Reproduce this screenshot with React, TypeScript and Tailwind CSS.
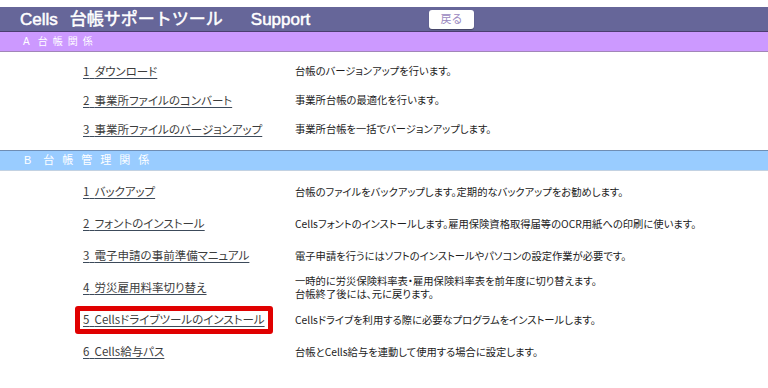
import React from "react";

type Row = { no: string; label: string; desc: string[]; mark?: boolean };

const SECTION_A: Row[] = [
  { no: "1", label: "ダウンロード", desc: ["台帳のバージョンアップを行います。"] },
  { no: "2", label: "事業所ファイルのコンバート", desc: ["事業所台帳の最適化を行います。"] },
  { no: "3", label: "事業所ファイルのバージョンアップ", desc: ["事業所台帳を一括でバージョンアップします。"] },
];

const SECTION_B: Row[] = [
  { no: "1", label: "バックアップ", desc: ["台帳のファイルをバックアップします。定期的なバックアップをお勧めします。"] },
  { no: "2", label: "フォントのインストール", desc: ["Cellsフォントのインストールします。雇用保険資格取得届等のOCR用紙への印刷に使います。"] },
  { no: "3", label: "電子申請の事前準備マニュアル", desc: ["電子申請を行うにはソフトのインストールやパソコンの設定作業が必要です。"] },
  {
    no: "4",
    label: "労災雇用料率切り替え",
    desc: ["一時的に労災保険料率表・雇用保険料率表を前年度に切り替えます。", "台帳終了後には、元に戻ります。"],
  },
  { no: "5", label: "Cellsドライブツールのインストール", desc: ["Cellsドライブを利用する際に必要なプログラムをインストールします。"], mark: true },
  { no: "6", label: "Cells給与パス", desc: ["台帳とCells給与を連動して使用する場合に設定します。"] },
];

const JP = { fontFamily: '"Noto Sans CJK JP", "Liberation Sans", sans-serif' };

function MenuRow({ row, height }: { row: Row; height: string }) {
  return (
    <div className={`grid grid-cols-[212px_1fr] items-center pl-[83px] ${height}`} style={JP}>
      <div className="text-[11.5px] leading-[14px]">
        <span className="relative">
          <a className="text-[#3c3c3c] underline decoration-[#3c4a5a] underline-offset-2 [font-feature-settings:'palt']">
            {row.no}
            {"\u00a0\u00a0"}
            {row.label}
          </a>
          {row.mark && (
            <span className="absolute -left-[8px] -right-[8px] -top-[5px] -bottom-[7px] rounded-[3px] border-[5px] border-[#e00000]" />
          )}
        </span>
      </div>
      <div className="text-[10.3px] leading-[13px] text-[#1c1c1c] [font-feature-settings:'palt']">
        {row.desc.map((d) => (
          <div key={d}>{d}</div>
        ))}
      </div>
    </div>
  );
}

export default function App() {
  return (
    <div
      className="w-[768px] h-[388px] overflow-hidden bg-white pt-[7px]"
      style={{ fontFamily: '"Liberation Sans", "Noto Sans CJK JP", sans-serif' }}
    >
      <div className="flex h-[24px] items-center bg-[#666699]">
        <div className="flex w-[429px] items-center pl-[20px] text-[17px] leading-none text-white [-webkit-text-stroke:0.5px_white]">
          <span>Cells</span>
          <span className="ml-[12px]">台帳サポートツール</span>
          <span className="ml-[28px]">Support</span>
        </div>
        <button className="h-[19px] w-[45px] rounded-[3px] bg-white text-[11px] leading-none text-[#9a88c0] shadow-[0_1px_1px_rgba(0,0,0,0.35)]">
          戻る
        </button>
      </div>

      <div className="flex h-[21px] items-center border-t border-b border-t-[#4b3d70] border-b-[#a286b8] bg-[#cc99ff] pl-[23px] text-[10px] tracking-[5px] text-white">
        <span>A</span>
        <span className="ml-[3px]">台帳関係</span>
      </div>

      <div className="pt-[4px] pb-[7px]">
        {SECTION_A.map((r) => (
          <MenuRow key={r.label} row={r} height="h-[29px]" />
        ))}
      </div>

      <div className="flex h-[21px] items-center border-t border-b border-t-[#6f8db3] border-b-[#c3d2e2] bg-[#99ccff] pl-[24px] text-[11px] tracking-[8px] text-white">
        <span>B</span>
        <span className="ml-[4px]">台帳管理関係</span>
      </div>

      <div className="pt-[4px]">
        {SECTION_B.map((r) => (
          <MenuRow key={r.label} row={r} height="h-[32px]" />
        ))}
      </div>
    </div>
  );
}
